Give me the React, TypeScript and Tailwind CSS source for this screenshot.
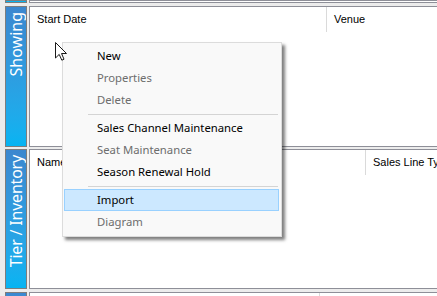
import { ReactNode } from "react";

type Column = { label: string; width?: number };

const Tab = ({ label, tight }: { label: string; tight?: boolean }) => (
  <div className="w-[22px] h-full border border-[#7d7d7d] bg-gradient-to-b from-[#3b87cf] to-[#05b4f2] flex flex-col items-center pt-[5px] overflow-hidden">
    <span
      className={`[writing-mode:vertical-rl] rotate-180 text-white text-[16px] leading-[20px] whitespace-nowrap font-['Noto_Sans',sans-serif] ${
        tight ? "tracking-[-0.2px]" : ""
      }`}
    >
      {label}
    </span>
  </div>
);

const Section = ({
  label,
  tight,
  columns,
  height,
  children,
}: {
  label?: string;
  tight?: boolean;
  columns: Column[];
  height: number;
  children?: ReactNode;
}) => (
  <div className="flex shrink-0" style={{ height }}>
    <div className="w-[29px] shrink-0 pl-[5px] h-full">
      {label !== undefined ? (
        <Tab label={label} tight={tight} />
      ) : (
        <div className="w-[22px] h-full border border-[#7d7d7d] bg-[#05b4f2]" />
      )}
    </div>
    <div className="flex-1 h-full bg-white border-l border-y border-[#8e8f98] overflow-hidden">
      <div className="flex h-[25px] items-center">
        {columns.map((col) => (
          <div
            key={col.label}
            className="h-full flex items-center px-[7px] border-r border-[#dadada] shrink-0 text-[11px] text-black font-['Liberation_Sans',Arial,sans-serif] whitespace-nowrap"
            style={{ width: col.width }}
          >
            {col.label}
          </div>
        ))}
      </div>
      {children}
    </div>
  </div>
);

type MenuItem = { label: string; disabled?: boolean; active?: boolean } | "sep";

const menuItems: MenuItem[] = [
  { label: "New" },
  { label: "Properties", disabled: true },
  { label: "Delete", disabled: true },
  "sep",
  { label: "Sales Channel Maintenance" },
  { label: "Seat Maintenance", disabled: true },
  { label: "Season Renewal Hold" },
  "sep",
  { label: "Import", active: true },
  { label: "Diagram", disabled: true },
];

const ContextMenu = () => (
  <div className="absolute left-[62px] top-[42px] w-[220px] pt-[2px] pb-[3px] bg-[#f9f9f9] border border-[#dcdcdc] shadow-[3px_3px_3px_rgba(0,0,0,0.5)] font-['Noto_Sans',sans-serif] text-[11.3px]">
    {menuItems.map((item, i) =>
      item === "sep" ? (
        <div key={i} className="h-[6px] flex items-center pl-[25px] pr-[3px]">
          <div className="h-px w-full bg-[#d4d4d4]" />
        </div>
      ) : (
        <div
          key={i}
          className={`h-[22px] flex items-center ml-px mr-[2px] pl-[32px] border ${
            item.active ? "bg-[#cce8ff] border-[#99d1ff]" : "border-transparent"
          } ${item.disabled ? "text-[#6d6d6d]" : "text-black"}`}
        >
          {item.label}
        </div>
      )
    )}
  </div>
);

const Cursor = () => (
  <svg className="absolute left-[54px] top-[41px]" width="14" height="21" viewBox="0 0 14 21">
    <path
      d="M1.5 1.5 L1.5 17 L5.2 13.4 L7.8 19.2 L10 18.2 L7.5 12.5 L12.5 12.5 Z"
      fill="#ffffff"
      stroke="#1a1a1a"
      strokeWidth="1"
      strokeLinejoin="round"
    />
  </svg>
);

export default function App() {
  return (
    <div className="relative w-[437px] h-[296px] overflow-hidden bg-[#ececec] flex flex-col">
      <Section columns={[]} height={3} />
      <div className="h-[3px] shrink-0" />
      <Section label="Showing" height={141} columns={[{ label: "Start Date", width: 297 }, { label: "Venue", width: 200 }]} />
      <div className="h-[2px] shrink-0" />
      <Section
        label="Tier / Inventory"
        tight
        height={140}
        columns={[{ label: "Name", width: 336 }, { label: "Sales Line Type", width: 200 }]}
      />
      <div className="h-[3px] shrink-0" />
      <Section label="" height={40} columns={[{ label: "", width: 290 }, { label: " ", width: 200 }]} />
      <ContextMenu />
      <Cursor />
    </div>
  );
}
